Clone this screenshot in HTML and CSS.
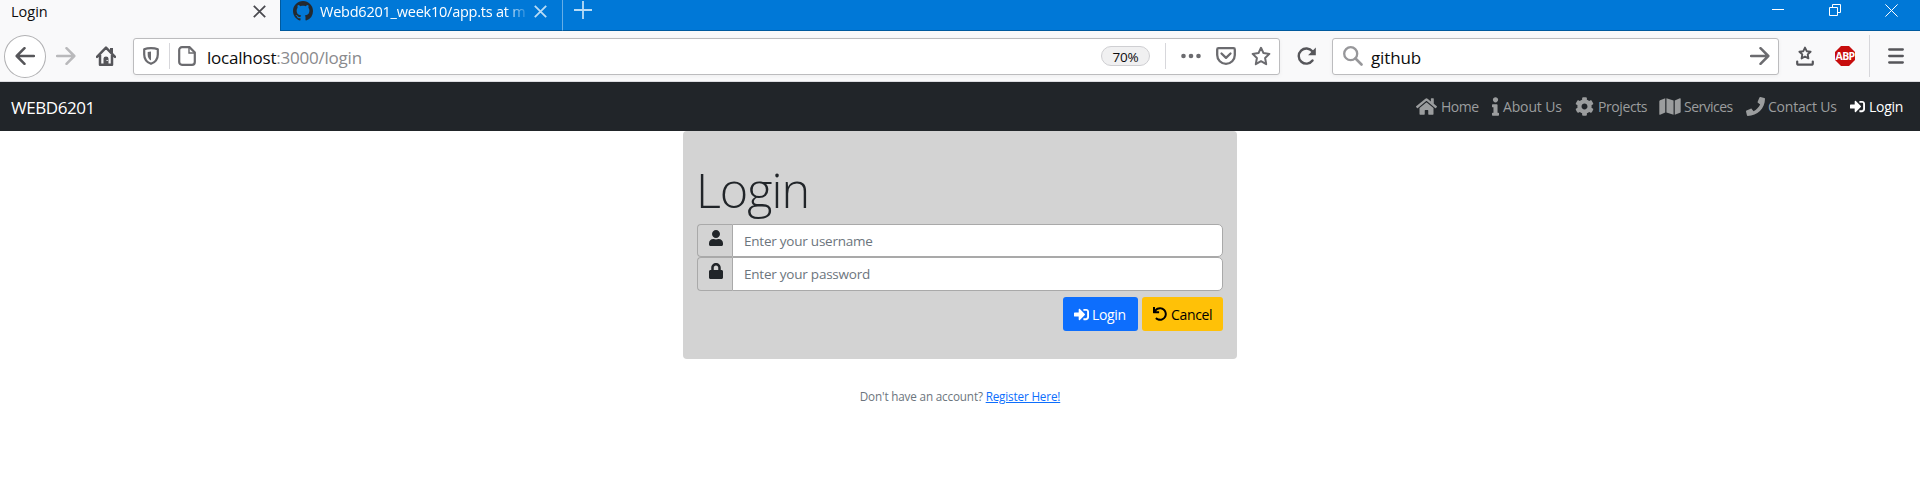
FILE: index.html
```html
<!DOCTYPE html>
<html lang="en">
<head>
<meta charset="utf-8">
<title>Login</title>
<link rel="stylesheet" href="styles.css">
</head>
<body>
<svg class="defs" aria-hidden="true">
  <symbol id="signin" viewBox="0 0 512 512"><path d="M416 448h-84c-6.600 0-12-5.400-12-12v-40c0-6.600 5.400-12 12-12h84c17.700 0 32-14.300 32-32V160c0-17.700-14.300-32-32-32h-84c-6.600 0-12-5.400-12-12V76c0-6.600 5.400-12 12-12h84c53 0 96 43 96 96v192c0 53-43 96-96 96zm-47-209L201 71c-15-15-41-4.500-41 17v96H24c-13.300 0-24 10.700-24 24v96c0 13.300 10.700 24 24 24h136v96c0 21.500 26 32 41 17l168-168c9.300-9.400 9.300-24.600 0-34z"/></symbol>
  <symbol id="close" viewBox="0 0 13 13"><path d="M.8.8l11.400 11.400M12.200.8L.8 12.200" fill="none" stroke="currentColor" stroke-width="1.800"/></symbol>
</svg>

<header class="tabs">
  <div class="tab active"><span class="tab-title">Login</span><svg class="close"><use href="#close"/></svg></div>
  <div class="tab other">
    <svg class="octo" viewBox="0 0 16 16"><path d="M8 0C3.580 0 0 3.580 0 8c0 3.540 2.290 6.530 5.470 7.590.4.070.55-.17.55-.38 0-.19-.01-.82-.01-1.490-2.010.37-2.530-.49-2.690-.94-.09-.23-.48-.94-.82-1.130-.28-.15-.68-.52-.01-.53.63-.01 1.080.58 1.230.82.72 1.210 1.870.87 2.330.66.07-.52.28-.87.51-1.070-1.780-.2-3.640-.89-3.640-3.950 0-.87.31-1.590.82-2.150-.08-.2-.36-1.020.08-2.120 0 0 .67-.21 2.200.82.64-.18 1.320-.27 2-.27s1.360.09 2 .27c1.530-1.040 2.200-.82 2.200-.82.44 1.100.16 1.920.08 2.120.51.56.82 1.270.82 2.150 0 3.070-1.870 3.750-3.650 3.950.29.25.54.73.54 1.480 0 1.070-.01 1.930-.01 2.200 0 .21.15.46.55.38A8.010 8.010 0 0 0 16 8c0-4.420-3.580-8-8-8z"/></svg>
    <span class="tab-title app">Webd6201_week10/app.ts at m</span>
    <svg class="close"><use href="#close"/></svg>
  </div>
  <svg class="plus" viewBox="0 0 18 18"><path d="M9 0v18M0 9h18" stroke="currentColor" stroke-width="1.800"/></svg>
  <div class="window">
    <svg class="minimize" width="12" height="14" viewBox="0 0 12 14"><path d="M0 5.500h12"/></svg>
    <svg width="12" height="12" viewBox="0 0 12 12"><path d="M.5 3.500h8v8h-8zM3.500 3V.5h8v8H9"/></svg>
    <svg width="13" height="13" viewBox="0 0 13 13"><path d="M.4.400l12.200 12.200M12.600.4L.4 12.600"/></svg>
  </div>
</header>

<div class="toolbar">
  <div class="back"><svg width="20" height="18" viewBox="0 0 20 18"><path d="M19 9H2M9.500 1.200L1.700 9l7.800 7.800"/></svg></div>
  <svg class="forward" width="20" height="18" viewBox="0 0 20 18"><path d="M1 9h17M10.500 1.200L18.300 9l-7.800 7.800"/></svg>
  <svg class="home" width="20" height="20" viewBox="0 0 20 20"><path d="M1 10.800L10 1.700l9 9.100M4 9v9.800h12V9" fill="none" stroke="currentColor" stroke-width="2.500" stroke-linecap="round" stroke-linejoin="round"/><path d="M14 2h3v6l-3-3zM7.500 12.500q0-2 2.500-2t2.500 2V19h-5z" fill="currentColor"/><path d="M10.500 14.500h1.300" stroke="#f9f9fa"/></svg>
  <div class="field url">
    <svg class="shield" width="16" height="18" viewBox="0 0 16 18"><path d="M8 1.100C5.500 1.100 3 1.500 1.200 2.300v5.200c0 4.500 2.800 7.800 6.800 9.300 4-1.500 6.800-4.800 6.800-9.300V2.300C13 1.500 10.500 1.100 8 1.100z" fill="none" stroke="currentColor" stroke-width="2.200" stroke-linejoin="round"/><path d="M8 4.400v9.200C5.700 12.200 4.700 10.200 4.700 7.500V4.900z" fill="currentColor"/></svg>
    <i class="sep"></i>
    <svg class="page" width="18" height="20" viewBox="0 0 18 20"><path d="M4 1.200h7.500L16.800 6.500V16a2.800 2.800 0 0 1-2.800 2.800H4A2.800 2.800 0 0 1 1.200 16V4A2.800 2.800 0 0 1 4 1.200z" fill="none" stroke="currentColor" stroke-width="2.200"/><path d="M11 2v5h5" fill="none" stroke="currentColor" stroke-width="1.400"/></svg>
    <span class="address"><b>localhost</b>:3000/login</span>
    <span class="zoom">70%</span>
    <i class="sep"></i>
    <svg class="dots" width="20" height="6" viewBox="0 0 20 6"><g fill="currentColor"><circle cx="2.500" cy="3" r="2.300"/><circle cx="10" cy="3" r="2.300"/><circle cx="17.500" cy="3" r="2.300"/></g></svg>
    <svg class="pocket" width="20" height="18" viewBox="0 0 20 18"><path d="M2.500 1.200h15q1.300 0 1.300 1.300V8a8.800 8.800 0 0 1-17.600 0V2.500q0-1.300 1.300-1.300zM5.500 6.500L10 10.800l4.500-4.300" fill="none" stroke="currentColor" stroke-width="2.300" stroke-linecap="round" stroke-linejoin="round"/></svg>
    <svg class="star" width="20" height="20" viewBox="0 0 20 20"><path d="M10 1.800l2.500 5.300 5.900.8-4.300 4.100 1.100 6.200L10 15.200l-5.200 3 1.100-6.200L1.600 7.900l5.900-.8z" fill="none" stroke="currentColor" stroke-width="2" stroke-linejoin="round"/></svg>
  </div>
  <svg class="reload" width="19" height="18" viewBox="0 0 19 18"><path d="M15.500 13.500A7.600 7.600 0 1 1 15.300 4.300" fill="none" stroke="currentColor" stroke-width="2.400" stroke-linecap="round"/><path d="M18.800.6v7.600h-7.700z" fill="currentColor"/></svg>
  <div class="field search">
    <svg class="lens" width="20" height="20" viewBox="0 0 20 20"><circle cx="7.700" cy="7.700" r="6.500" fill="none" stroke="currentColor" stroke-width="2.300"/><path d="M12.500 12.500l6 6" stroke="currentColor" stroke-width="2.600" stroke-linecap="round"/></svg>
    <span class="query">github</span>
    <svg class="go" width="20" height="18" viewBox="0 0 20 18"><path d="M1 9h17M10.500 1.200L18.300 9l-7.800 7.800"/></svg>
  </div>
  <svg class="marks" width="18" height="20" viewBox="0 0 18 20"><path d="M9 1.600l1.700 3.600 3.900.5-2.900 2.700.7 4L9 10.500l-3.400 1.900.7-4-2.900-2.700 3.900-.5z" fill="none" stroke="currentColor" stroke-width="1.900" stroke-linejoin="round"/><path d="M1.200 15.500v1.700q0 1.500 1.500 1.500h12.600q1.500 0 1.500-1.500v-1.700" fill="none" stroke="currentColor" stroke-width="2.200" stroke-linecap="round"/></svg>
  <div class="abp">ABP</div>
  <i class="divider"></i>
  <svg class="menu" width="16" height="16" viewBox="0 0 16 16"><path d="M1.200 1.500h13.600M1.200 8h13.600M1.200 14.500h13.600" stroke="currentColor" stroke-width="2.300" stroke-linecap="round"/></svg>
</div>

<nav class="navbar">
  <span class="brand">WEBD6201</span>
  <a class="n-home"><svg width="21" height="19" viewBox="0 0 576 512"><path d="M280.370 148.260L96 300.110V464a16 16 0 0 0 16 16l112.060-.29a16 16 0 0 0 15.920-16V368a16 16 0 0 1 16-16h64a16 16 0 0 1 16 16v95.640a16 16 0 0 0 16 16.050L464 480a16 16 0 0 0 16-16V300L295.670 148.260a12.190 12.190 0 0 0-15.300 0zM571.600 251.470L488 182.560V44.050a12 12 0 0 0-12-12h-56a12 12 0 0 0-12 12v72.610L318.470 43a48 48 0 0 0-61 0L4.340 251.470a12 12 0 0 0-1.600 16.900l25.500 31A12 12 0 0 0 45.150 301l235.220-193.740a12.190 12.190 0 0 1 15.300 0L530.900 301a12 12 0 0 0 16.900-1.600l25.500-31a12 12 0 0 0-1.700-16.930z"/></svg><span>Home</span></a>
  <a class="n-about"><svg width="7" height="19" viewBox="0 0 192 512"><path d="M20 424.229h20V279.771H20c-11.046 0-20-8.954-20-20V212c0-11.046 8.954-20 20-20h112c11.046 0 20 8.954 20 20v212.229h20c11.046 0 20 8.954 20 20V492c0 11.046-8.954 20-20 20H20c-11.046 0-20-8.954-20-20v-47.771c0-11.046 8.954-20 20-20zM96 0C56.235 0 24 32.235 24 72s32.235 72 72 72 72-32.235 72-72S135.764 0 96 0z"/></svg><span>About Us</span></a>
  <a class="n-projects"><svg width="19" height="19" viewBox="0 0 512 512"><path d="M487.400 315.700l-42.600-24.600c4.300-23.200 4.300-47 0-70.200l42.600-24.600c4.900-2.800 7.100-8.600 5.500-14-11.100-35.600-30-67.800-54.700-94.600-3.800-4.100-10-5.100-14.800-2.300L380.800 110c-17.900-15.400-38.500-27.300-60.800-35.100V25.800c0-5.600-3.900-10.500-9.400-11.700-36.700-8.200-74.300-7.800-109.200 0-5.500 1.200-9.400 6.100-9.400 11.700V75c-22.200 7.900-42.800 19.800-60.800 35.100L88.700 85.500c-4.900-2.800-11-1.900-14.800 2.300-24.700 26.700-43.600 58.900-54.700 94.600-1.700 5.400.6 11.200 5.500 14L67.300 221c-4.300 23.200-4.300 47 0 70.200l-42.600 24.600c-4.900 2.800-7.100 8.600-5.500 14 11.100 35.600 30 67.800 54.700 94.600 3.800 4.100 10 5.100 14.800 2.300l42.600-24.600c17.900 15.400 38.500 27.300 60.800 35.100v49.200c0 5.600 3.900 10.500 9.400 11.700 36.700 8.200 74.300 7.800 109.200 0 5.500-1.200 9.400-6.100 9.400-11.700v-49.200c22.200-7.900 42.800-19.800 60.800-35.100l42.600 24.600c4.900 2.800 11 1.900 14.800-2.300 24.700-26.700 43.600-58.900 54.700-94.600 1.500-5.500-.7-11.300-5.600-14.100zM256 336c-44.100 0-80-35.900-80-80s35.900-80 80-80 80 35.900 80 80-35.900 80-80 80z"/></svg><span>Projects</span></a>
  <a class="n-services"><svg width="22" height="19" viewBox="0 0 576 512"><path d="M0 117.660v346.320c0 11.320 11.430 19.060 21.940 14.860L160 416V32L20.120 87.950A32.006 32.006 0 0 0 0 117.660zM192 416l192 64V96L192 32v384zM554.060 33.160L416 96v384l139.880-55.950A31.996 31.996 0 0 0 576 394.340V48.020c0-11.320-11.430-19.060-21.940-14.860z"/></svg><span>Services</span></a>
  <a class="n-contact"><svg width="19" height="19" viewBox="0 0 512 512"><path d="M493.400 24.600l-104-24c-11.300-2.600-22.900 3.300-27.500 13.900l-48 112c-4.200 9.800-1.400 21.300 6.900 28l60.600 49.600c-36 76.700-98.900 140.500-177.200 177.200l-49.600-60.600c-6.800-8.300-18.200-11.100-28-6.900l-112 48C3.900 366.500-2 378.100.6 389.400l24 104C27.100 504.200 36.700 512 48 512c256.100 0 464-207.500 464-464 0-11.200-7.700-20.900-18.600-23.400z"/></svg><span>Contact Us</span></a>
  <a class="n-login"><svg width="15" height="15"><use href="#signin"/></svg><span>Login</span></a>
</nav>

<main>
  <section class="card">
    <h1>Login</h1>
    <div class="group g1"><div class="addon"><svg width="14" height="16" viewBox="0 0 448 512"><path d="M224 256c70.700 0 128-57.300 128-128S294.700 0 224 0 96 57.300 96 128s57.300 128 128 128zm89.600 32h-16.700c-22.200 10.200-46.900 16-72.900 16s-50.600-5.800-72.900-16h-16.700C60.200 288 0 348.200 0 422.400V464c0 26.500 21.500 48 48 48h352c26.500 0 48-21.500 48-48v-41.600c0-74.200-60.200-134.400-134.400-134.400z"/></svg></div><div class="input"><span>Enter your username</span></div></div>
    <div class="group g2"><div class="addon"><svg width="14" height="16" viewBox="0 0 448 512"><path d="M400 224h-24v-72C376 68.200 307.800 0 224 0S72 68.200 72 152v72H48c-26.500 0-48 21.500-48 48v192c0 26.500 21.500 48 48 48h352c26.500 0 48-21.500 48-48V272c0-26.500-21.500-48-48-48zm-104 0H152v-72c0-39.700 32.300-72 72-72s72 32.300 72 72v72z"/></svg></div><div class="input"><span>Enter your password</span></div></div>
    <div class="buttons">
      <div class="btn primary"><svg width="15" height="15"><use href="#signin"/></svg><span>Login</span></div>
      <div class="btn warning"><svg width="14" height="14" viewBox="0 0 512 512"><path d="M212.333 224.333H12c-6.627 0-12-5.373-12-12V12C0 5.373 5.373 0 12 0h48c6.627 0 12 5.373 12 12v78.112C117.773 39.279 184.260 7.470 258.175 8.007c136.906.994 246.448 111.623 246.157 248.532C504.041 393.258 393.120 504 256.333 504c-64.089 0-122.496-24.313-166.510-64.215-5.099-4.622-5.334-12.554-.467-17.420l33.967-33.967c4.474-4.474 11.662-4.717 16.401-.525C170.760 415.336 211.580 432 256.333 432c97.268 0 176-78.716 176-176 0-97.267-78.716-176-176-176-58.496 0-110.280 28.476-142.274 72.333h98.274c6.627 0 12 5.373 12 12v48c0 6.627-5.373 12-12 12z"/></svg><span>Cancel</span></div>
    </div>
  </section>
  <p class="register">Don't have an account? <a>Register Here!</a></p>
</main>
</body>
</html>
```
FILE: styles.css
```css
* { box-sizing: border-box; }
body { margin: 0; height: 489px; overflow: hidden; background: #fff; color: #212529; font-family: "Open Sans", "Noto Sans", sans-serif; font-size: 14px; }
svg { display: block; flex: none; }
span { white-space: nowrap; }
.defs { position: absolute; width: 0; height: 0; }

.tabs { height: 31px; display: flex; background: #0078d7; color: #fff; box-shadow: inset 0 -1px #005a9e; }
.tab { display: flex; height: 31px; font-size: 14.500px; line-height: 23px; }
.tab .close { width: 13px; height: 13px; margin-top: 5px; }
.active { width: 280px; padding: 0 14px 0 11px; justify-content: space-between; background: #f9f9fa; color: #0c0c0d; }
.active .close { color: #4a4a4f; }
.other { width: 283px; padding-left: 12px; border-left: 1px solid #005a9e; border-right: 1px solid #66aee7; border-bottom: 1px solid #005a9e; }
.other .close { color: #b8dcf6; margin-left: 4px; }
.octo { width: 20px; height: 20px; margin: 1px 7px 0 0; fill: #24292e; }
.app { width: 210px; letter-spacing: -.23px; -webkit-mask-image: linear-gradient(to right, #000 185px, transparent 210px); mask-image: linear-gradient(to right, #000 185px, transparent 210px); }
.plus { width: 18px; height: 18px; margin: 1px 0 0 11px; color: #b8dcf6; }
.window { margin-left: auto; display: flex; gap: 44px; padding: 4px 22px 0 0; }
.window svg { fill: none; stroke: #fff; stroke-width: 1; }
.minimize { margin-right: 1px; }

.toolbar { height: 51px; display: flex; align-items: center; background: #f9f9fa; border-bottom: 1px solid #dcdce0; color: #56565a; }
.back { width: 42px; height: 43px; margin-left: 4px; border: 1px solid #b1b1b3; border-radius: 50%; background: #fff; display: flex; align-items: center; justify-content: center; }
.back svg, .forward, .go { fill: none; stroke: currentColor; stroke-width: 2.500; stroke-linecap: round; stroke-linejoin: round; }
.forward { margin-left: 10px; color: #b9b9bb; }
.home { margin-left: 20px; }
.field { height: 37px; border: 1px solid #bcbcbe; border-radius: 3px; background: #fff; display: flex; align-items: center; color: #6b6b6f; box-shadow: 0 1px 4px #0000000d; font-size: 17px; }
.url { width: 1147px; margin-left: 17px; padding-left: 9px; }
.sep { width: 1px; height: 26px; background: #d7d7db; }
.shield + .sep { margin-left: 10px; }
.page { margin-left: 8px; }
.address { margin-left: 11px; color: #8a8a8d; padding-top: 3px; letter-spacing: -.22px; }
.address b { font-weight: 400; color: #0c0c0d; }
.zoom { margin-left: auto; width: 49px; height: 20px; border: 1px solid #cfcfd2; border-radius: 10px; background: #f0f0f1; color: #0c0c0d; font-size: 13.500px; line-height: 20px; text-align: center; letter-spacing: -.2px; }
.zoom + .sep { margin-left: 15px; }
.dots { margin-left: 15px; }
.pocket { margin-left: 15px; }
.star { margin: 0 8px 0 15px; }
.reload { margin-left: 17px; }
.search { width: 447px; margin-left: 16px; padding: 0 8px 0 10px; }
.lens { color: #97979a; }
.query { margin-left: 8px; color: #0c0c0d; padding-top: 3px; letter-spacing: -.15px; }
.go { margin-left: auto; }
.marks { margin-left: 17px; }
.abp { width: 20px; height: 20px; margin-left: 21px; background: #c70d0d; color: #fff; clip-path: polygon(30% 0, 70% 0, 100% 30%, 100% 70%, 70% 100%, 30% 100%, 0 70%, 0 30%); font-weight: 700; font-size: 10.500px; line-height: 20px; display: flex; justify-content: center; letter-spacing: -.7px; }
.divider { width: 1px; height: 42px; margin-left: 14px; background: #d7d7db; }
.menu { margin-left: 18px; }

.navbar { height: 49px; background: #212529; display: flex; align-items: center; padding: 0 17px 0 11px; color: #9b9d9e; line-height: 19px; }
.brand { margin-right: auto; font-size: 17px; color: #fff; padding-top: 2px; letter-spacing: -.45px; }
.navbar a { display: flex; align-items: center; gap: 4px; }
.navbar a svg, .addon svg, .btn svg { fill: currentColor; }
.n-home { width: 76px; letter-spacing: -.5px; }
.n-about { width: 83px; letter-spacing: -.15px; }
.n-projects { width: 84px; letter-spacing: -.4px; }
.navbar .n-services { width: 87px; gap: 3px; letter-spacing: -.55px; }
.navbar .n-contact { width: 104px; gap: 3px; letter-spacing: -.2px; }
.navbar .n-login { width: 53px; color: #fff; letter-spacing: -.3px; }

main { display: flex; flex-direction: column; align-items: center; }
.card { width: 554px; height: 228px; padding: 26px 14px 28px; border-radius: 4px; background: #d3d3d3; }
h1 { margin: 0 0 2px; height: 65px; font-size: 48.500px; font-weight: 300; line-height: 65px; letter-spacing: -1px; text-indent: -1px; }
.group { display: flex; color: #6c757d; }
.g1 { height: 33px; }
.g2 { height: 34px; }
.addon { width: 35px; border: 1px solid #a9a9a9; border-right: 0; border-radius: 4px 0 0 4px; color: #212529; padding: 5px 0 0 11px; }
.input { flex: 1; border: 1px solid #a9a9a9; border-radius: 0 5px 5px 0; background: #fff; padding-left: 11px; line-height: 33px; font-size: 13.500px; letter-spacing: -.23px; }
.buttons { display: flex; justify-content: flex-end; gap: 4px; margin-top: 6px; }
.btn { height: 34px; display: flex; align-items: center; gap: 3px; padding-left: 11px; border-radius: 3px; letter-spacing: -.35px; }
.primary { width: 75px; background: #0d6efd; color: #fff; }
.warning { width: 81px; gap: 4px; background: #ffc107; color: #000; }
.register { margin: 28px 0 0; font-size: 11.700px; line-height: 19px; color: #6c757d; letter-spacing: -.16px; }
.register a { color: #0d6efd; text-decoration: underline; }
```
